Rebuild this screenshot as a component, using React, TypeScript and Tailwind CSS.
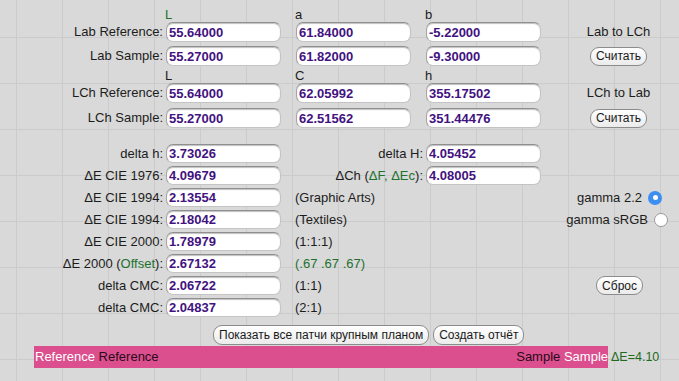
import React from 'react'

const green = 'text-[#21702e]'

function Field({ value, tall }: { value: string; tall?: boolean }) {
  return (
    <input
      readOnly
      value={value}
      className={
        (tall ? 'h-[20px] ' : 'h-[19px] ') +
        'w-[115px] shrink-0 rounded-[7px] border border-[#c4c4c4] border-t-[#8f8f8f] border-l-[#a5a5a5] bg-white pl-[2px] text-[13px] font-bold text-[#43127f] shadow-[inset_0_1px_1px_rgba(0,0,0,0.25)] outline-none'
      }
    />
  )
}

function Btn({ children, className = '' }: { children: React.ReactNode; className?: string }) {
  return (
    <button
      className={
        'h-[19px] shrink-0 rounded-[9px] border border-[#8c8c8c] bg-linear-to-b from-white to-[#ebebeb] px-[5px] text-[12px] leading-none text-[#1a1a1a] ' +
        className
      }
    >
      {children}
    </button>
  )
}

function Radio({ checked }: { checked?: boolean }) {
  return checked ? (
    <span className="flex h-[14px] w-[14px] shrink-0 items-center justify-center rounded-full bg-[#3c8ef0]">
      <span className="h-[5px] w-[5px] rounded-full bg-white" />
    </span>
  ) : (
    <span className="h-[14px] w-[14px] shrink-0 rounded-full border border-[#9a9a9a] bg-white" />
  )
}

function UpperRow({ label, vals, right }: { label: string; vals: string[]; right: React.ReactNode }) {
  return (
    <div className="flex h-[20px] items-center">
      <div className="w-[163px] shrink-0 text-right">{label}</div>
      <div className="ml-[3px] flex gap-[15px]">
        {vals.map((v) => (
          <Field key={v} value={v} tall />
        ))}
      </div>
      <div className="ml-[16px] flex w-[123px] shrink-0 justify-center">{right}</div>
    </div>
  )
}

function Header({ letters, firstGreen }: { letters: string[]; firstGreen?: boolean }) {
  return (
    <div className="flex items-center pl-[165px]">
      {letters.map((l, i) => (
        <div key={l} className={'w-[130px] shrink-0 ' + (i === 0 && firstGreen ? green : '')}>
          {l}
        </div>
      ))}
    </div>
  )
}

type LowerProps = {
  label: React.ReactNode
  value: string
  mid?: React.ReactNode
  midLabel?: React.ReactNode
  value2?: string
  right?: React.ReactNode
}

function LowerRow({ label, value, mid, midLabel, value2, right }: LowerProps) {
  return (
    <div className="flex h-[19px] items-center">
      <div className="w-[163px] shrink-0 text-right whitespace-nowrap">{label}</div>
      <div className="ml-[3px]">
        <Field value={value} />
      </div>
      <div className="w-[142px] shrink-0 whitespace-nowrap">
        {midLabel ? <div className="text-right">{midLabel}</div> : <div className="pl-[14px]">{mid}</div>}
      </div>
      <div className="ml-[3px] w-[115px] shrink-0">{value2 && <Field value={value2} />}</div>
      <div className="flex flex-1 items-center justify-end">{right}</div>
    </div>
  )
}

export default function App() {
  return (
    <div className="h-[381px] w-[679px] overflow-hidden bg-[#d9d9d9] bg-[linear-gradient(to_right,#cbcbcb_1px,transparent_1px),linear-gradient(to_bottom,#cbcbcb_1px,transparent_1px)] bg-[size:46px_46px] bg-[position:16px_37px] font-['Liberation_Sans',Arial,sans-serif] text-[13px] text-[#1c1c1c]">
      <div className="pt-[7px]">
        <div className="h-[15px] leading-[15px]">
          <Header letters={['L', 'a', 'b']} firstGreen />
        </div>
        <UpperRow label="Lab Reference:" vals={['55.64000', '61.84000', '-5.22000']} right={<span>Lab to LCh</span>} />
        <div className="mt-[4px]">
          <UpperRow label="Lab Sample:" vals={['55.27000', '61.82000', '-9.30000']} right={<Btn>Считать</Btn>} />
        </div>
        <div className="h-[17px] leading-[19px]">
          <Header letters={['L', 'C', 'h']} />
        </div>
        <UpperRow label="LCh Reference:" vals={['55.64000', '62.05992', '355.17502']} right={<span>LCh to Lab</span>} />
        <div className="mt-[5px]">
          <UpperRow label="LCh Sample:" vals={['55.27000', '62.51562', '351.44476']} right={<Btn>Считать</Btn>} />
        </div>
      </div>

      <div className="mt-[16px] flex flex-col gap-[3px]">
        <LowerRow label="delta h:" value="3.73026" midLabel="delta H:" value2="4.05452" />
        <LowerRow
          label="ΔE CIE 1976:"
          value="4.09679"
          midLabel={
            <>
              ΔCh (<span className={green}>ΔF, ΔEc</span>):
            </>
          }
          value2="4.08005"
        />
        <LowerRow
          label="ΔE CIE 1994:"
          value="2.13554"
          mid="(Graphic Arts)"
          right={
            <div className="flex items-center gap-[6px] pr-[17px]">
              <span>gamma 2.2</span>
              <Radio checked />
            </div>
          }
        />
        <LowerRow
          label="ΔE CIE 1994:"
          value="2.18042"
          mid="(Textiles)"
          right={
            <div className="flex items-center gap-[6px] pr-[11px]">
              <span>gamma sRGB</span>
              <Radio />
            </div>
          }
        />
        <LowerRow label="ΔE CIE 2000:" value="1.78979" mid="(1:1:1)" />
        <LowerRow
          label={
            <>
              ΔE 2000 (<span className={green}>Offset</span>):
            </>
          }
          value="2.67132"
          mid={<span className={green}>(.67 .67 .67)</span>}
        />
        <LowerRow
          label="delta CMC:"
          value="2.06722"
          mid="(1:1)"
          right={
            <div className="pr-[36px]">
              <Btn>Сброс</Btn>
            </div>
          }
        />
        <LowerRow label="delta CMC:" value="2.04837" mid="(2:1)" />
      </div>

      <div className="mt-[8px] flex gap-[4px] pl-[213px]">
        <Btn className="h-[20px]">Показать все патчи крупным планом</Btn>
        <Btn className="h-[20px]">Создать отчёт</Btn>
      </div>

      <div className="mt-[1px] flex items-center pl-[34px]">
        <div className="flex h-[22px] w-[574px] shrink-0 items-center justify-between bg-[#db4f8e] pl-[1px]">
          <div>
            <span className="text-white">Reference</span> <span className="text-[#2a0a18]">Reference</span>
          </div>
          <div>
            <span className="text-[#2a0a18]">Sample</span> <span className="text-white">Sample</span>
          </div>
        </div>
        <span className="ml-[3px] text-[12.5px] text-[#1d6b1d]">ΔE=4.10</span>
      </div>
    </div>
  )
}
